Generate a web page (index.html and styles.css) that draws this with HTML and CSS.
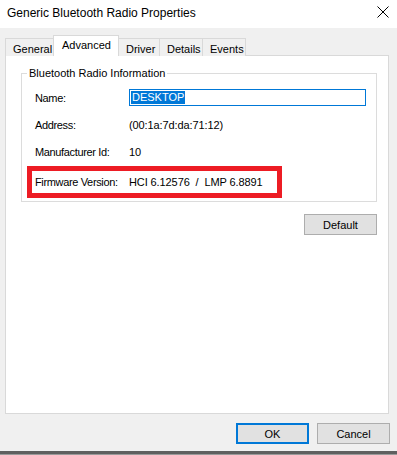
FILE: index.html
```html
<!DOCTYPE html>
<html>
<head>
<meta charset="utf-8">
<link rel="stylesheet" href="styles.css">
</head>
<body>
<div class="window">
  <div class="titlebar">
    <span class="title">Generic Bluetooth Radio Properties</span>
    <svg class="close" width="12" height="12" viewBox="0 0 12 12"><path d="M0.5 0.5 L11.5 11.5 M11.5 0.5 L0.5 11.5" stroke="#000" stroke-width="1" fill="none"/></svg>
  </div>
  <div class="content">
    <div class="tabs">
      <div class="tab">General</div>
      <div class="tab selected">Advanced</div>
      <div class="tab">Driver</div>
      <div class="tab">Details</div>
      <div class="tab">Events</div>
    </div>
    <div class="panel">
      <fieldset class="group">
        <legend>Bluetooth Radio Information</legend>
        <div class="row">
          <span class="label">Name:</span>
          <span class="textbox"><span class="sel">DESKTOP</span></span>
        </div>
        <div class="row">
          <span class="label">Address:</span>
          <span class="value">(00:1a:7d:da:71:12)</span>
        </div>
        <div class="row">
          <span class="label">Manufacturer Id:</span>
          <span class="value">10</span>
        </div>
        <div class="row highlight">
          <span class="label">Firmware Version:</span>
          <span class="value">HCI 6.12576&nbsp; /&nbsp; LMP 6.8891</span>
        </div>
      </fieldset>
      <div class="defrow">
        <button class="btn">Default</button>
      </div>
    </div>
    <div class="footer">
      <button class="btn ok">OK</button>
      <button class="btn">Cancel</button>
    </div>
  </div>
  <div class="bottomline"></div>
</div>
</body>
</html>
```

FILE: styles.css
```css
html, body {
  margin: 0;
  padding: 0;
}
body {
  width: 397px;
  height: 455px;
  overflow: hidden;
  background: #f0f0f0;
  font-family: "Liberation Sans", Arial, sans-serif;
  font-size: 11px;
  color: #000;
}
.window {
  display: flex;
  flex-direction: column;
  height: 455px;
}
.titlebar {
  height: 28px;
  background: #fff;
  display: flex;
  align-items: center;
  justify-content: space-between;
  padding: 0 8px 0 7px;
  flex: none;
}
.title {
  font-size: 12px;
  font-family: "Liberation Sans", Arial, sans-serif;
  margin-top: -2px;
}
.close {
  margin-top: -4px;
}
.content {
  flex: 1;
  display: flex;
  flex-direction: column;
  padding: 8px 8px 0 5px;
}
.tabs {
  display: flex;
  align-items: flex-end;
  height: 20px;
  position: relative;
  z-index: 1;
  margin-bottom: -1px;
}
.tab {
  height: 18px;
  box-sizing: border-box;
  border: 1px solid #d9d9d9;
  border-bottom: none;
  margin-right: -1px;
  background: #f0f0f0;
  padding: 0 7px;
  line-height: 18px;
  padding-top: 1px;
}
.tab:first-child {
  width: 50px;
}
.tab.selected {
  height: 21px;
  background: #fff;
  padding: 0 7px 0 8px;
  margin-left: -1px;
  margin-right: -1px;
  position: relative;
  z-index: 2;
  line-height: 18px;
  width: 66px;
}
.tab:nth-child(3) { width: 42px; }
.tab:nth-child(4) { width: 44px; }
.tab:nth-child(5) { width: 44px; }
.panel {
  background: #fff;
  border: 1px solid #d9d9d9;
  height: 359px;
  box-sizing: border-box;
  padding: 11px 11px 0 15px;
  display: flex;
  flex-direction: column;
}
.group {
  margin: 0;
  border: 1px solid #dcdcdc;
  padding: 4px 4px 3px 5px;
  min-width: 0;
}
.group legend {
  padding: 0 2px;
  font-size: 11px;
  line-height: 13px;
}
.row {
  height: 27px;
  display: flex;
  align-items: center;
  padding-left: 8px;
  box-sizing: border-box;
}
.label {
  width: 94px;
  flex: none;
  letter-spacing: -0.35px;
}
.value {
  white-space: pre;
  letter-spacing: -0.1px;
}
.textbox {
  flex: 1;
  height: 17px;
  box-sizing: border-box;
  border: 1px solid #0078d7;
  margin-right: 6px;
  display: flex;
  align-items: center;
  padding-left: 1px;
}
.sel {
  background: #0078d7;
  color: #fff;
  line-height: 13px;
  padding: 0 1px;
}
.row.highlight {
  height: 32px;
  width: 255px;
  border: 5px solid #ed1c24;
  padding-left: 3px;
  margin-top: 1px;
}
.defrow {
  display: flex;
  justify-content: flex-end;
  margin-top: 12px;
}
.btn {
  font-family: "Liberation Sans", Arial, sans-serif;
  font-size: 11px;
  color: #000;
  background: #e1e1e1;
  border: 1px solid #adadad;
  width: 73px;
  height: 21px;
  padding: 0;
  margin: 0;
}
.footer {
  display: flex;
  justify-content: flex-end;
  gap: 8px;
  margin-top: 9px;
  margin-right: -1px;
}
.btn.ok {
  border: 2px solid #0078d7;
}
.bottomline {
  height: 3px;
  background: #5f5f5f;
  border-bottom: 1px solid #9a9a9a;
  flex: none;
  margin-top: auto;
}
```
